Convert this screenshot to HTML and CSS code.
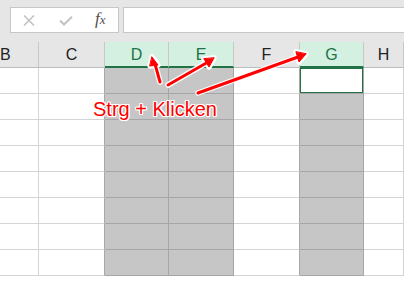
FILE: index.html
```html
<!DOCTYPE html>
<html lang="de">
<head>
  <meta charset="UTF-8" />
  <title>Spalten markieren</title>
  <link rel="stylesheet" href="styles.css">
</head>
<body>
  <div class="toolbar">
    <div class="fbuttons">
      <svg class="ico" width="12" height="11" viewBox="0 0 12 11"><path d="M1 0.5 L11 10.5 M11 0.5 L1 10.5" stroke="#c3c3c3" stroke-width="1.6" fill="none"/></svg>
      <svg class="ico check" width="14" height="10" viewBox="0 0 14 10"><path d="M1 4.5 L5 8.5 L13 0.8" stroke="#c3c3c3" stroke-width="2" fill="none"/></svg>
      <span class="fx">f<span>x</span></span>
    </div>
    <div class="formula"></div>
  </div>

  <div class="sheet">
    <div class="hd">B</div>
    <div class="hd pre">C</div>
    <div class="hd on">D</div>
    <div class="hd on">E</div>
    <div class="hd pre">F</div>
    <div class="hd on">G</div>
    <div class="hd">H</div>

    <div class="c"></div><div class="c pre"></div><div class="c sel"></div><div class="c sel"></div><div class="c pre"></div><div class="c active"></div><div class="c"></div>
    <div class="c"></div><div class="c pre"></div><div class="c sel"></div><div class="c sel"></div><div class="c pre"></div><div class="c sel"></div><div class="c"></div>
    <div class="c"></div><div class="c pre"></div><div class="c sel"></div><div class="c sel"></div><div class="c pre"></div><div class="c sel"></div><div class="c"></div>
    <div class="c"></div><div class="c pre"></div><div class="c sel"></div><div class="c sel"></div><div class="c pre"></div><div class="c sel"></div><div class="c"></div>
    <div class="c"></div><div class="c pre"></div><div class="c sel"></div><div class="c sel"></div><div class="c pre"></div><div class="c sel"></div><div class="c"></div>
    <div class="c"></div><div class="c pre"></div><div class="c sel"></div><div class="c sel"></div><div class="c pre"></div><div class="c sel"></div><div class="c"></div>
    <div class="c"></div><div class="c pre"></div><div class="c sel"></div><div class="c sel"></div><div class="c pre"></div><div class="c sel"></div><div class="c"></div>
    <div class="c"></div><div class="c pre"></div><div class="c sel"></div><div class="c sel"></div><div class="c pre"></div><div class="c sel"></div><div class="c"></div>
  </div>

  <!-- Hinweis mit Pfeilen -->
  <div class="note">
    <svg class="arrows" width="404" height="286" viewBox="0 0 404 286">
      <g stroke="#fff" stroke-width="5.5" stroke-linecap="round" fill="#fff" stroke-linejoin="round">
        <line x1="160" y1="82" x2="155" y2="64"/>
        <polygon points="152,57 158,65 150,66"/>
        <line x1="168" y1="85" x2="208" y2="62"/>
        <polygon points="214,58 209,67 204,59"/>
        <line x1="198" y1="93" x2="298" y2="57"/>
        <polygon points="306,54 299,62 296,52"/>
      </g>
      <g stroke="#ff0000" stroke-width="3" stroke-linecap="round" fill="#ff0000" stroke-linejoin="round">
        <line x1="160" y1="82" x2="155" y2="64"/>
        <polygon points="152,57 158,65 150,66" stroke-width="1"/>
        <line x1="168" y1="85" x2="208" y2="62"/>
        <polygon points="214,58 209,67 204,59" stroke-width="1"/>
        <line x1="198" y1="93" x2="298" y2="57"/>
        <polygon points="306,54 299,62 296,52" stroke-width="1"/>
      </g>
    </svg>
    <div class="label">Strg + Klicken</div>
  </div>
</body>
</html>
```

FILE: styles.css
```css
* { margin: 0; padding: 0; box-sizing: border-box; }
html, body {
  width: 404px;
  height: 286px;
  overflow: hidden;
  background: #fff;
  font-family: 'Liberation Sans', Arial, sans-serif;
}
body { position: relative; }

.toolbar {
  height: 42px;
  background: #e6e6e6;
  display: flex;
  gap: 4px;
  padding: 7px 0 0 10px;
}
.fbuttons {
  width: 109px;
  height: 26px;
  background: #fff;
  border: 1px solid #c6c6c6;
  display: flex;
  align-items: center;
  padding-left: 12px;
}
.ico { display: block; }
.check { margin-left: 24px; margin-top: 2px; }
.fx {
  margin-left: 22px;
  font-family: 'Liberation Serif', serif;
  font-style: italic;
  font-size: 17px;
  color: #505050;
  margin-top: -2px;
}
.fx span { font-size: 13px; }
.formula {
  flex: 1;
  height: 26px;
  background: #fff;
  border: 1px solid #c6c6c6;
  border-right: none;
}

.sheet {
  display: grid;
  grid-template-columns: 39px 66px 64px 65px 66px 64px 1fr;
  grid-template-rows: 26px;
  grid-auto-rows: 26px;
}
.hd {
  background: #e6e6e6;
  border-right: 1px solid #c8c8c8;
  border-bottom: 1px solid #bdbdbd;
  display: flex;
  align-items: center;
  justify-content: center;
  font-size: 16px;
  color: #222;
  padding-top: 1px;
}
.hd:first-child { justify-content: flex-start; }
.hd.on {
  background: #d3f0e0;
  color: #217346;
  border-bottom: 2px solid #217346;
}
.c {
  border-right: 1px solid #d4d4d4;
  border-bottom: 1px solid #d4d4d4;
}
.c.pre { border-right-color: #a8a8a8; }
.c.sel {
  background: #c6c6c6;
  border-right-color: #a6a6a6;
  border-bottom-color: #a6a6a6;
}
.c.active {
  background: #fff;
  border-right-color: #a6a6a6;
  border-bottom-color: #a6a6a6;
  box-shadow: inset 0 0 0 1px #217346;
}

.note {
  position: absolute;
  inset: 0;
  pointer-events: none;
}
.arrows { position: absolute; left: 0; top: 0; }
.label {
  position: absolute;
  left: 93px;
  top: 98px;
  font-size: 20px;
  color: #ff0000;
  text-shadow: 1px 0 #fff, -1px 0 #fff, 0 1px #fff, 0 -1px #fff, 1px 1px #fff, -1px -1px #fff, 1px -1px #fff, -1px 1px #fff;
}
```
